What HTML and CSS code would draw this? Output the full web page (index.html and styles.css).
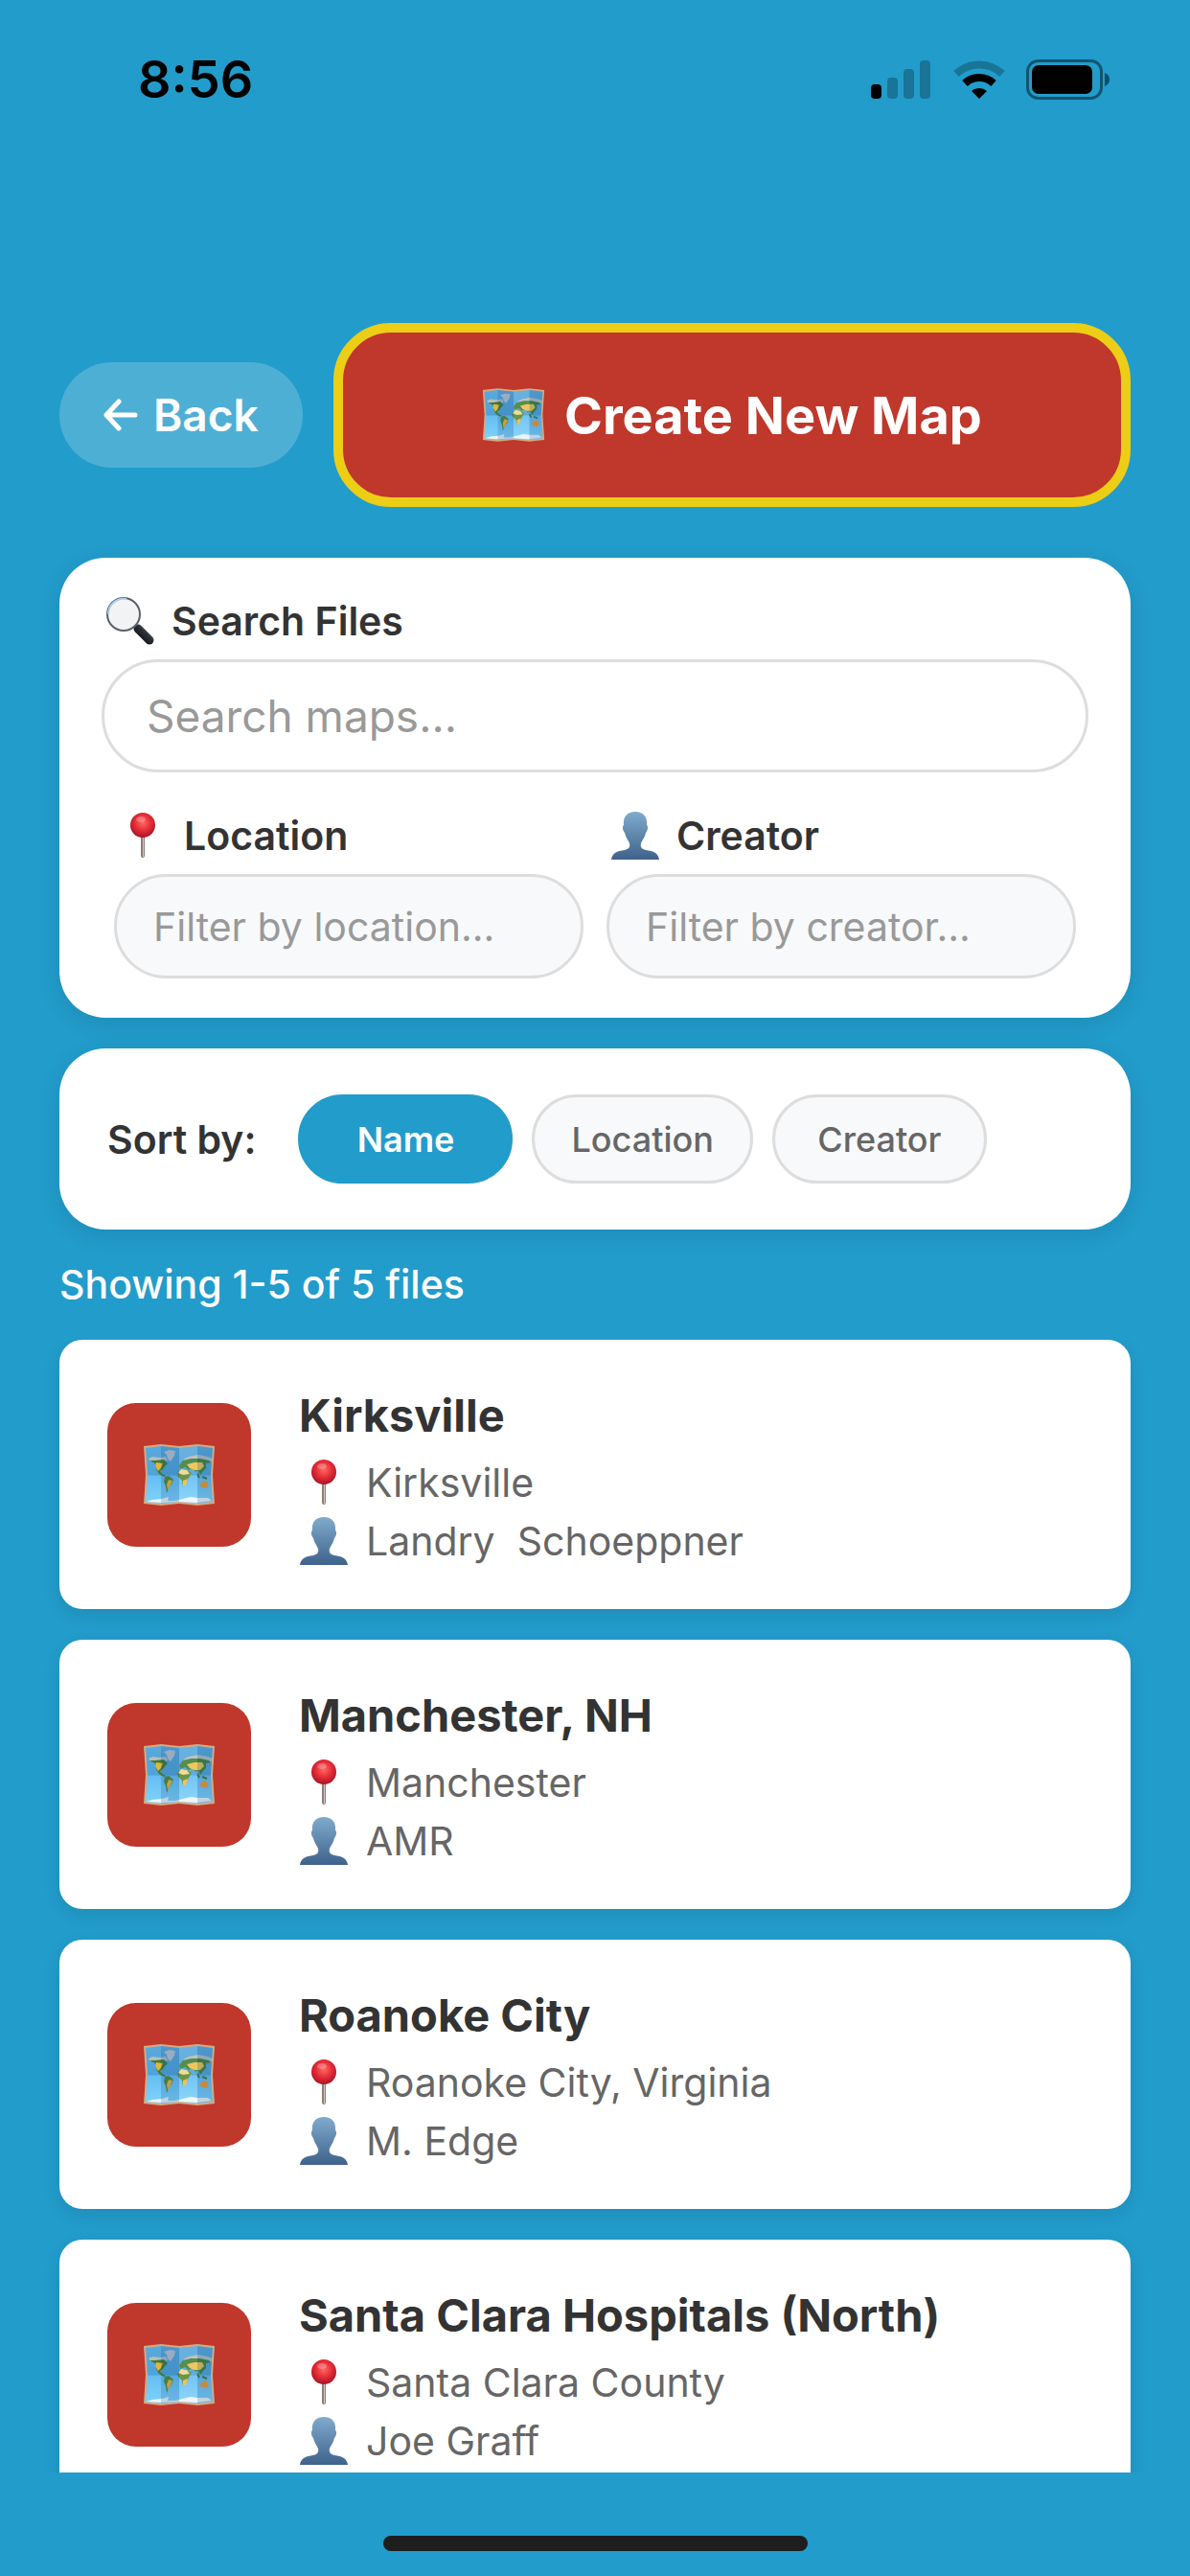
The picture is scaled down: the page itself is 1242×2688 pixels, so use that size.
FILE: index.html
```html
<!DOCTYPE html>
<html lang="en">
<head>
    <meta charset="UTF-8">
    <meta name="viewport" content="width=device-width, initial-scale=1.0">
    <title>Map Files</title>
    <link rel="stylesheet" href="styles.css">
</head>
<body>
    <!-- shared icons -->
    <svg class="icon-defs" aria-hidden="true">
        <defs>
            <linearGradient id="sea" x1="0" y1="0" x2="0" y2="1">
                <stop offset="0" stop-color="#5aa9dc"/>
                <stop offset="0.5" stop-color="#4fa3d8"/>
                <stop offset="0.52" stop-color="#66bdf2"/>
                <stop offset="1" stop-color="#7fd3fb"/>
            </linearGradient>
            <linearGradient id="skin" x1="0" y1="0" x2="0" y2="1">
                <stop offset="0" stop-color="#7fabcd"/>
                <stop offset="1" stop-color="#3f628b"/>
            </linearGradient>
            <radialGradient id="ball" cx="0.5" cy="0.4" r="0.6">
                <stop offset="0" stop-color="#ff6a62"/>
                <stop offset="0.5" stop-color="#e8303a"/>
                <stop offset="1" stop-color="#a81324"/>
            </radialGradient>
            <linearGradient id="handle" x1="0" y1="1" x2="1" y2="0">
                <stop offset="0" stop-color="#0c0e12"/>
                <stop offset="0.6" stop-color="#2a2e35"/>
                <stop offset="1" stop-color="#5a6068"/>
            </linearGradient>

            <symbol id="icon-map" viewBox="0 0 76 64">
                <path d="M1 2 L19 0 L38 2 L57 0 L75 2 L73 32 L75 62 L57 64 L38 62 L19 64 L1 62 L3 32 Z" fill="#d3ab83"/>
                <path d="M3 4 L19 2 L38 4 L57 2 L73 4 L71 32 L73 60 L57 62 L38 60 L19 62 L3 60 L5 32 Z" fill="url(#sea)"/>
                <path d="M22 8 L28 6 L34 7 L33 12 L29 18 L26 15 L25 11 Z" fill="#b9c4cf"/>
                <path d="M6 15 L10 13 L18 14 L24 13 L26 17 L21 18 L8 18 Z M42 16 L48 13 L58 11 L68 13 L73 15 L71 19 L58 17 L46 18 Z" fill="#b3bfbe"/>
                <path d="M7 17 L13 17 L22 16 L26 20 L23 23 L21 26 L18 28 L20 31 L24 33 L22 34 L17 31 L14 26 L13 20 Z" fill="#3f7a35"/>
                <path d="M14 19 L21 20 L19 25 L16 28 L13 23 Z" fill="#e4b53c"/>
                <path d="M23 34 L27 33 L32 37 L30 42 L27 46 L25 51 L24 44 L22 39 Z" fill="#4f8a32"/>
                <path d="M27 37 L31 38 L29 43 L26 48 L25 42 Z" fill="#e9b43a"/>
                <path d="M38 22 L42 17 L50 15 L60 15 L69 17 L71 19 L66 20 L66 25 L63 28 L60 32 L58 27 L55 29 L52 25 L48 27 L44 24 L39 26 Z" fill="#43803a"/>
                <path d="M46 21 L54 19 L62 19 L64 23 L60 27 L54 27 L49 25 Z" fill="#eac24e"/>
                <path d="M36 31 L39 26 L45 26 L51 30 L48 35 L46 39 L44 43 L42 44 L41 38 L37 34 Z" fill="#5d8a34"/>
                <path d="M37 30 L40 26 L46 27 L49 31 L42 32 Z" fill="#ecd991"/>
                <path d="M42 38 L47 36 L45 43 L42 44 Z" fill="#eebd42"/>
                <path d="M60 41 L64 38 L67 39 L69 43 L66 46 L60 44 Z" fill="#ef9a2e"/>
                <path d="M57 31 L59 35 M62 34 L67 36" stroke="#3f7a35" stroke-width="2" fill="none"/>
                <path d="M4 60 L10 58 L20 57 L27 55 L26 59 L34 59 L42 57 L50 55 L57 56 L68 56 L72 59 L57 61 L38 60 L20 61 Z" fill="#eef3f6"/>
                <!-- folds -->
                <path d="M19 2 L38 4 V60 L19 62 Z M57 2 L73 4 L71 32 L73 60 L57 62 Z" fill="#1b4f8c" opacity="0.2"/>
                <path d="M38 4 L57 2 V62 L38 60 Z" fill="#ffffff" opacity="0.1"/>
            </symbol>

            <symbol id="icon-pin" viewBox="0 0 52 52">
                <rect x="24" y="26" width="4" height="23" rx="2" fill="#8f7d76"/>
                <rect x="26" y="28" width="1" height="20" fill="#d4c8c2"/>
                <circle cx="26" cy="15" r="13" fill="url(#ball)"/>
                <ellipse cx="24" cy="9" rx="5" ry="3" fill="#ffffff" opacity="0.25"/>
            </symbol>

            <symbol id="icon-person" viewBox="0 0 52 52">
                <path d="M26 1 C34 1 39 6 38 15 C40 16 39 21 37 23 C36 28 33 31 32 34 C31 38 33 40 37 41 C45 42 50 44 51 51 H1 C2 44 7 42 15 41 C19 40 21 38 20 34 C19 31 16 28 15 23 C13 21 12 16 14 15 C13 6 18 1 26 1 Z" fill="url(#skin)"/>
            </symbol>

            <symbol id="icon-search" viewBox="0 0 52 52">
                <path d="M29 29 L35 35" stroke="#6d747d" stroke-width="4"/>
                <path d="M34 34 L46 46" stroke="url(#handle)" stroke-width="9" stroke-linecap="round"/>
                <circle cx="19" cy="19" r="17" fill="#f2f3f4" stroke="#5b6168" stroke-width="2"/>
                <path d="M3 19 A16 16 0 0 1 22 3" stroke="#a9cdf2" stroke-width="2" fill="none"/>
            </symbol>
        </defs>
    </svg>

    <header class="status-bar">
        <span class="time">8:56</span>
        <div class="status-icons">
            <svg class="signal" viewBox="0 0 64 40" role="img" aria-label="Signal">
                <rect x="0" y="25" width="11" height="15" rx="4"/>
                <g opacity="0.25">
                    <rect x="17" y="18" width="11" height="22" rx="4"/>
                    <rect x="34" y="9" width="11" height="31" rx="4"/>
                    <rect x="51" y="0" width="11" height="40" rx="4"/>
                </g>
            </svg>
            <svg class="wifi" viewBox="0 0 54 40" role="img" aria-label="Wi-Fi">
                <path d="M3 14 A35 35 0 0 1 51 14" fill="none" stroke="#000" stroke-width="8" opacity="0.25"/>
                <path d="M12 24 A22 22 0 0 1 42 24" fill="none" stroke="#000" stroke-width="8"/>
                <path d="M27 40 L19 32 A12 12 0 0 1 35 32 Z"/>
            </svg>
            <svg class="battery" viewBox="0 0 88 42" role="img" aria-label="Battery">
                <rect x="1.5" y="1.5" width="77" height="39" rx="11" fill="none" stroke="#000" stroke-width="3" opacity="0.45"/>
                <rect x="6" y="6" width="63" height="30" rx="7"/>
                <path d="M82 14 Q87 16 87 21 Q87 26 82 28 Z" opacity="0.5"/>
            </svg>
        </div>
    </header>

    <main class="content">
        <div class="top-actions">
            <button type="button" class="back-btn">
                <svg class="arrow" viewBox="0 0 36 34" aria-hidden="true"><path d="M33 17 H3 M16 3 L3 17 L16 31"/></svg>
                Back
            </button>
            <button type="button" class="create-btn">
                <svg class="map-icon" aria-hidden="true"><use href="#icon-map"/></svg>
                Create New Map
            </button>
        </div>

        <form class="card search-card">
            <label for="search"><svg class="icon" aria-hidden="true"><use href="#icon-search"/></svg>Search Files</label>
            <input type="text" id="search" class="search-input" placeholder="Search maps...">
            <div class="filters">
                <div class="filter">
                    <label for="location"><svg class="icon" aria-hidden="true"><use href="#icon-pin"/></svg>Location</label>
                    <input type="text" id="location" placeholder="Filter by location...">
                </div>
                <div class="filter">
                    <label for="creator"><svg class="icon" aria-hidden="true"><use href="#icon-person"/></svg>Creator</label>
                    <input type="text" id="creator" placeholder="Filter by creator...">
                </div>
            </div>
        </form>

        <section class="card sort-card">
            <span class="sort-label">Sort by:</span>
            <button type="button" class="sort-btn active">Name</button>
            <button type="button" class="sort-btn">Location</button>
            <button type="button" class="sort-btn">Creator</button>
        </section>

        <p class="count">Showing 1-5 of 5 files</p>

        <section class="file-list">
            <article class="file">
                <div class="file-icon"><svg aria-hidden="true"><use href="#icon-map"/></svg></div>
                <div class="file-info">
                    <h2>Kirksville</h2>
                    <p><svg class="icon" aria-hidden="true"><use href="#icon-pin"/></svg>Kirksville</p>
                    <p><svg class="icon" aria-hidden="true"><use href="#icon-person"/></svg>Landry&nbsp; Schoeppner</p>
                </div>
            </article>
            <article class="file">
                <div class="file-icon"><svg aria-hidden="true"><use href="#icon-map"/></svg></div>
                <div class="file-info">
                    <h2>Manchester, NH</h2>
                    <p><svg class="icon" aria-hidden="true"><use href="#icon-pin"/></svg>Manchester</p>
                    <p><svg class="icon" aria-hidden="true"><use href="#icon-person"/></svg>AMR</p>
                </div>
            </article>
            <article class="file">
                <div class="file-icon"><svg aria-hidden="true"><use href="#icon-map"/></svg></div>
                <div class="file-info">
                    <h2>Roanoke City</h2>
                    <p><svg class="icon" aria-hidden="true"><use href="#icon-pin"/></svg>Roanoke City, Virginia</p>
                    <p><svg class="icon" aria-hidden="true"><use href="#icon-person"/></svg>M. Edge</p>
                </div>
            </article>
            <article class="file">
                <div class="file-icon"><svg aria-hidden="true"><use href="#icon-map"/></svg></div>
                <div class="file-info">
                    <h2>Santa Clara Hospitals (North)</h2>
                    <p><svg class="icon" aria-hidden="true"><use href="#icon-pin"/></svg>Santa Clara County</p>
                    <p><svg class="icon" aria-hidden="true"><use href="#icon-person"/></svg>Joe Graff</p>
                </div>
            </article>
        </section>
    </main>

    <footer class="home-area">
        <div class="home-bar"></div>
    </footer>
</body>
</html>
```

FILE: styles.css
```css
* {
    box-sizing: border-box;
}

body {
    display: flex;
    flex-direction: column;
    height: 100vh;
    margin: 0;
    background-color: #229ccb;
    color: #333333;
    font-family: Inter, "Liberation Sans", sans-serif;
    font-size: 41px;
    overflow: hidden;
}

button, input {
    font-family: inherit;
}

h2, p {
    margin: 0;
}

.icon-defs {
    position: absolute;
    width: 0;
    height: 0;
}

.icon {
    width: 52px;
    height: 52px;
    flex-shrink: 0;
}

/* status bar */
.status-bar {
    display: flex;
    justify-content: space-between;
    align-items: center;
    padding: 51px 83px 0 144px;
}

.time {
    color: #000000;
    font-size: 54px;
    line-height: 64px;
    font-weight: 600;
}

.status-icons {
    display: flex;
    align-items: center;
    gap: 22px;
}

.signal {
    width: 64px;
    height: 40px;
}

.wifi {
    width: 54px;
    height: 40px;
}

.battery {
    width: 88px;
    height: 42px;
}

.content {
    display: flex;
    flex-direction: column;
    flex: 1;
    min-height: 0;
    padding-top: 222px;
}

/* back + create */
.top-actions {
    display: flex;
    align-items: center;
    gap: 32px;
    margin: 0 62px 53px;
}

.back-btn, .create-btn {
    display: flex;
    align-items: center;
    justify-content: center;
    color: #ffffff;
    cursor: pointer;
}

.back-btn {
    gap: 16px;
    height: 110px;
    padding: 0 46px;
    border: none;
    border-radius: 55px;
    background-color: rgba(255, 255, 255, 0.2);
    font-size: 46px;
    font-weight: 600;
}

.arrow {
    width: 36px;
    height: 34px;
    fill: none;
    stroke: #ffffff;
    stroke-width: 5;
    stroke-linecap: round;
    stroke-linejoin: round;
}

.create-btn {
    flex: 1;
    gap: 20px;
    height: 192px;
    border: 10px solid #ecce16;
    border-radius: 60px;
    background-color: #c0372b;
    font-size: 54px;
    font-weight: 700;
}

.map-icon {
    width: 66px;
    height: 56px;
}

/* search */
.card {
    margin: 0 62px;
    border-radius: 48px;
    background-color: #ffffff;
    box-shadow: 0 6px 24px rgba(0, 0, 0, 0.1);
}

.search-card {
    padding: 40px 44px 41px;
    margin-bottom: 32px;
}

.search-card label {
    display: flex;
    align-items: center;
    gap: 17px;
    height: 52px;
    margin-bottom: 14px;
    padding: 0 4px;
    font-weight: 600;
}

.search-card input {
    display: block;
    width: 100%;
    height: 109px;
    padding: 0 38px;
    border: 3px solid #dddddd;
    border-radius: 60px;
    background-color: #f8f9fb;
    font-size: 41px;
}

.search-card .search-input {
    height: 118px;
    padding: 0 44px;
    background-color: #ffffff;
    font-size: 46px;
}

.search-card input::placeholder {
    color: #999999;
}

.filters {
    display: flex;
    gap: 24px;
    margin: 40px 13px 0;
}

.filter {
    flex: 1;
    min-width: 0;
}

/* sort */
.sort-card {
    display: flex;
    align-items: center;
    gap: 20px;
    padding: 48px 50px;
}

.sort-label {
    margin-right: 24px;
    font-weight: 600;
}

.sort-btn {
    min-width: 224px;
    height: 93px;
    padding: 0 38px;
    border: 3px solid #dddddd;
    border-radius: 48px;
    background-color: #f8f9fb;
    color: #666666;
    font-size: 36px;
    font-weight: 500;
    cursor: pointer;
}

.sort-btn.active {
    border-color: #229ccb;
    background-color: #229ccb;
    color: #ffffff;
    font-weight: 600;
}

.count {
    margin: 33px 62px;
    color: #ffffff;
    line-height: 49px;
    font-weight: 500;
}

/* files */
.file-list {
    flex: 1;
    min-height: 0;
    padding: 0 62px;
    overflow: hidden;
}

.file {
    display: flex;
    align-items: center;
    gap: 50px;
    height: 281px;
    margin-bottom: 32px;
    padding: 0 50px;
    border-radius: 24px;
    background-color: #ffffff;
    box-shadow: 0 6px 18px rgba(0, 0, 0, 0.1);
}

.file-icon {
    display: flex;
    align-items: center;
    justify-content: center;
    width: 150px;
    height: 150px;
    border-radius: 30px;
    background-color: #c0372b;
}

.file-icon svg {
    width: 76px;
    height: 64px;
}

.file-info {
    padding-top: 10px;
}

.file-info h2 {
    margin-bottom: 12px;
    font-size: 47px;
    line-height: 56px;
    font-weight: 700;
}

.file-info p {
    display: flex;
    align-items: center;
    gap: 18px;
    color: #666666;
    line-height: 61px;
}

/* home indicator */
.home-area {
    display: flex;
    justify-content: center;
    height: 108px;
    padding-top: 66px;
}

.home-bar {
    width: 443px;
    height: 16px;
    border-radius: 8px;
    background-color: #1e1e1e;
}
```
